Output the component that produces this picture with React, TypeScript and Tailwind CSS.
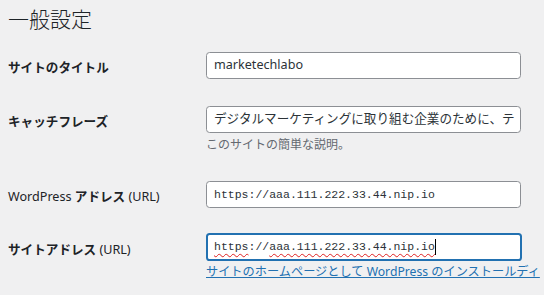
import React from "react";

const jp = { fontFamily: '"Noto Sans", "Noto Sans CJK JP", sans-serif' };
const mono = { fontFamily: '"Liberation Mono", "DejaVu Sans Mono", monospace' };

function Label({ children }: { children: React.ReactNode }) {
  return (
    <div className="w-[198px] shrink-0 pt-[22px] text-[12.6px] leading-[16px] font-bold text-[#1d2327]">
      {children}
    </div>
  );
}

export default function App() {
  return (
    <div className="w-[544px] h-[295px] overflow-hidden bg-[#f0f0f1] pl-[8px]" style={jp}>
      <h1 className="pt-[6px] pb-[5px] text-[21px] leading-[27px] font-light text-[#1d2327]">一般設定</h1>

      <div className="flex h-[54px]">
        <Label>サイトのタイトル</Label>
        <div className="pt-[14px]">
          <div className="w-[315px] h-[27px] rounded-[3.6px] border border-[#8c8f94] bg-white px-[7px] flex items-center text-[12.6px] text-[#2c3338]">
            marketechlabo
          </div>
        </div>
      </div>

      <div className="flex h-[75px]">
        <Label>キャッチフレーズ</Label>
        <div className="pt-[14px]">
          <div className="w-[315px] h-[27px] rounded-[3.6px] border border-[#8c8f94] bg-white px-[7px] flex items-center overflow-hidden whitespace-nowrap text-[12.6px] text-[#2c3338]">
            デジタルマーケティングに取り組む企業のために、テ
          </div>
          <p className="mt-[4px] text-[12px] leading-[15px] text-[#646970]">このサイトの簡単な説明。</p>
        </div>
      </div>

      <div className="flex h-[53px]">
        <Label>
          <span className="font-normal">WordPress</span> アドレス <span className="font-normal">(URL)</span>
        </Label>
        <div className="pt-[14px]">
          <div className="w-[315px] h-[27px] rounded-[3.6px] border border-[#8c8f94] bg-white px-[7px] flex items-center text-[11.5px] text-[#2c3338]" style={mono}>
            https://aaa.111.222.33.44.nip.io
          </div>
        </div>
      </div>

      <div className="flex">
        <Label>
          サイトアドレス <span className="font-normal">(URL)</span>
        </Label>
        <div className="pt-[13px]">
          <div className="w-[316px] h-[28px] rounded-[3.6px] border-2 border-[#2271b1] bg-white px-[6px] flex items-center text-[11.5px] text-[#2c3338]" style={mono}>
            <span className="underline decoration-wavy decoration-[#e02020] decoration-1 underline-offset-[3px]">https</span>
            <span>://</span>
            <span className="underline decoration-wavy decoration-[#e02020] decoration-1 underline-offset-[3px]">aaa.111.222.33.44.nip.io</span>
            <span className="inline-block w-px h-[16px] bg-black"></span>
          </div>
          <a className="mt-[3px] block whitespace-nowrap text-[12.2px] leading-[15px] text-[#2271b1] underline" href="#">
            サイトのホームページとして WordPress のインストールディ
          </a>
        </div>
      </div>
    </div>
  );
}
